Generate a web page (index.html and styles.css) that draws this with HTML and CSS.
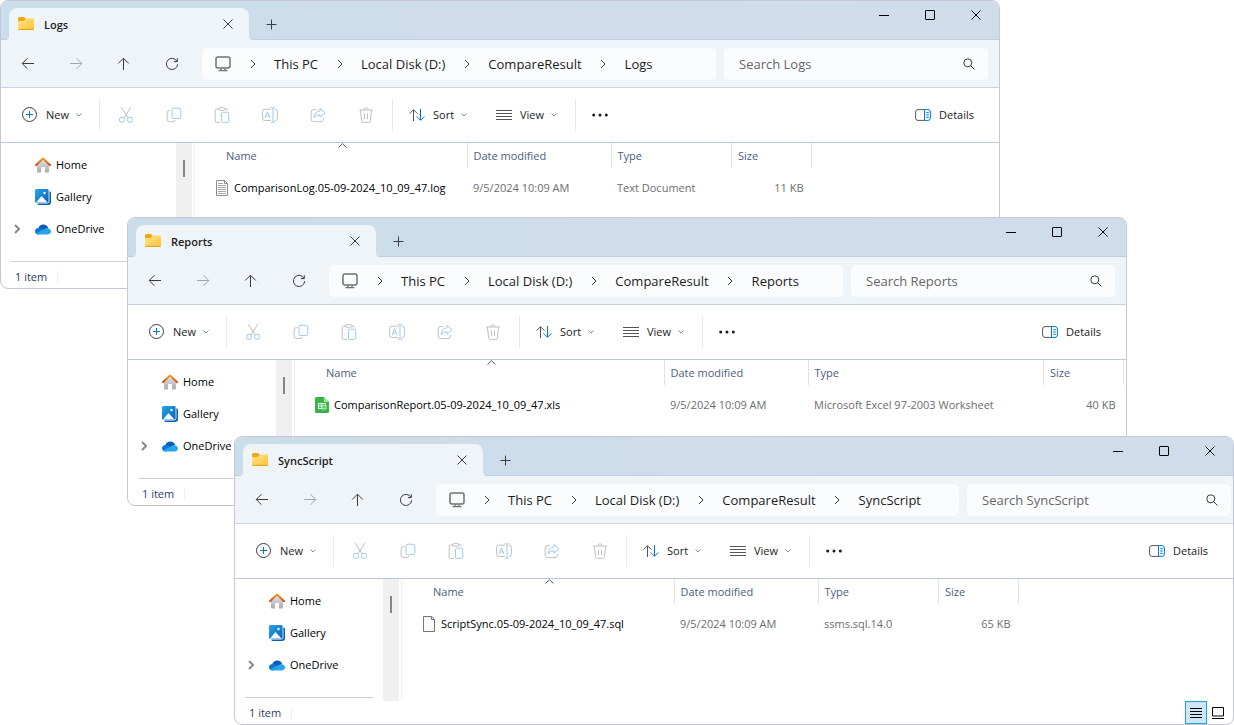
FILE: index.html
```
<!DOCTYPE html>
<html lang="en">
<head>
  <meta charset="UTF-8">
  <meta name="viewport" content="width=device-width, initial-scale=1.0">
  <title>CompareResult</title>
  <link rel="stylesheet" href="styles.css">
</head>
<body>
<svg class="sprite" aria-hidden="true">
  <defs>
    <linearGradient id="g-folder" x1="0" y1="0" x2="1" y2="1">
      <stop offset="0" stop-color="#ffe494"/><stop offset="1" stop-color="#fcc32e"/>
    </linearGradient>
    <linearGradient id="g-roof" x1="0" y1="0" x2="0" y2="1">
      <stop offset="0" stop-color="#f39a1f"/><stop offset="1" stop-color="#d0471a"/>
    </linearGradient>
    <linearGradient id="g-wall" x1="0" y1="0" x2="0" y2="1">
      <stop offset="0" stop-color="#e4e4e4"/><stop offset="1" stop-color="#ababab"/>
    </linearGradient>
    <linearGradient id="g-photo" x1="0" y1="0" x2="1" y2="1">
      <stop offset="0" stop-color="#2aa5ea"/><stop offset="1" stop-color="#0562b8"/>
    </linearGradient>
  </defs>
  <symbol id="folder" viewBox="0 0 16 14">
    <path d="M0 1.5Q0 0 1.5 0H5.3Q6 0 6.6.6L8 2V5H0Z" fill="#f0a80c"/>
    <path d="M0 4H5.6L8 1.6H14.6Q16 1.6 16 3V11.6Q16 13 14.6 13H1.4Q0 13 0 11.6Z" fill="url(#g-folder)"/>
    <path d="M.4 12.4H15.6" stroke="#e2a01c" stroke-width="1"/>
  </symbol>
  <symbol id="x" viewBox="0 0 10 10"><path d="M.5.5 9.5 9.5M9.5.5.5 9.5"/></symbol>
  <symbol id="plus" viewBox="0 0 11 11"><path d="M5.5.5V10.5M.5 5.5H10.5"/></symbol>
  <symbol id="min" viewBox="0 0 10 10"><path d="M0 5.5H10"/></symbol>
  <symbol id="max" viewBox="0 0 10 10"><rect x=".5" y=".5" width="9" height="9" rx=".5"/></symbol>
  <symbol id="back" viewBox="0 0 14 14"><path d="M13 6.5H1.2M6.5 1.2 1.2 6.5 6.5 11.8"/></symbol>
  <symbol id="forward" viewBox="0 0 14 14"><path d="M1 6.5H12.8M7.5 1.2 12.8 6.5 7.5 11.8"/></symbol>
  <symbol id="up" viewBox="0 0 14 14"><path d="M6.5 13V1.2M1.2 6.5 6.5 1.2 11.8 6.5"/></symbol>
  <symbol id="refresh" viewBox="0 0 14 14"><path d="M12 4.4A5.6 5.6 0 1 0 12.6 7.2M12.3 1.2V4.6H8.9"/></symbol>
  <symbol id="pc" viewBox="0 0 16 16">
    <rect x="1" y="1" width="14" height="11" rx="2" stroke-width="1.5"/>
    <path d="M6 12.5V14.5M10 12.5V14.5M3.6 14.7H12.4" stroke-width="1.3"/>
  </symbol>
  <symbol id="chev" viewBox="0 0 6 10"><path d="M1 1 5 5 1 9"/></symbol>
  <symbol id="down" viewBox="0 0 6 4"><path d="M.5.5 3 3 5.5.5"/></symbol>
  <symbol id="caret" viewBox="0 0 9 5"><path d="M.5 4.5 4.5.7 8.5 4.5"/></symbol>
  <symbol id="search" viewBox="0 0 12 12"><circle cx="4.8" cy="4.8" r="4"/><path d="M7.7 7.7 11.4 11.4"/></symbol>
  <symbol id="new" viewBox="0 0 16 16"><circle cx="7.5" cy="7.5" r="7"/><path class="blue" d="M7.5 4V11M4 7.5H11"/></symbol>
  <symbol id="cut" viewBox="0 0 16 16">
    <path d="M3 0 10.2 11M13 0 5.8 11"/>
    <circle class="pale" cx="4" cy="12.8" r="2.6"/><circle class="pale" cx="12" cy="12.8" r="2.6"/>
  </symbol>
  <symbol id="copy" viewBox="0 0 16 16">
    <path d="M4.5 3.7H3.2Q1.2 3.7 1.2 5.7V12.3Q1.2 14.6 3.5 14.6H7Q9 14.6 9 13"/>
    <rect class="pale" x="6" y="1.2" width="8.8" height="10.4" rx="2"/>
  </symbol>
  <symbol id="paste" viewBox="0 0 16 16">
    <path d="M5 2H2.6Q1.2 2 1.2 3.4V14Q1.2 15.4 2.6 15.4H6M11 2H12.2Q13.6 2 13.6 3.4"/>
    <rect x="4.6" y=".6" width="6.4" height="2.6" rx="1.3"/>
    <rect class="pale" x="7.5" y="5.2" width="7.2" height="10.2" rx="1.2"/>
  </symbol>
  <symbol id="rename" viewBox="0 0 16 16">
    <path d="M9 2.2H2.7Q.6 2.2 .6 4.3V11.4Q.6 13.5 2.7 13.5H9M13 2.2Q15.4 2.2 15.4 4.3V11.4Q15.4 13.5 13 13.5"/>
    <path class="pale" d="M11 .7V15.3M8.8.6Q11 .6 11 1.6Q11 .6 13.2.6M8.8 15.4Q11 15.4 11 14.4Q11 15.4 13.2 15.4M3 11 5.5 4.8 8 11M4 9H7.2"/>
  </symbol>
  <symbol id="share" viewBox="0 0 16 16">
    <path d="M6 2.6H3.6Q1.2 2.6 1.2 5V12Q1.2 14.6 3.6 14.6H11Q13.4 14.6 13.4 12V11"/>
    <path class="pale" d="M10 1.4 15 5.8 10 10.2V7.8Q6.2 7.6 4.2 10.6Q4.4 4.6 10 3.9Z"/>
  </symbol>
  <symbol id="trash" viewBox="0 0 16 16"><path d="M1.2 3H14.8M5.8 3Q5.8.8 8 .8T10.2 3M2.4 3 3.6 13.7Q3.8 15.4 5.4 15.4H10.6Q12.2 15.4 12.4 13.7L13.6 3M6.5 6.5V12M9.5 6.5V12"/></symbol>
  <symbol id="sort" viewBox="0 0 16 12"><path d="M4.5 12V.8M.6 4.6 4.5.7 8.4 4.6"/><path class="blue" d="M11.5 0V11.2M7.6 7.4 11.5 11.3 15.4 7.4"/></symbol>
  <symbol id="view" viewBox="0 0 16 10"><path d="M0 .5H16M0 3.5H16M0 6.5H16M0 9.5H16"/></symbol>
  <symbol id="more" viewBox="0 0 16 4"><g class="dots"><circle cx="1.7" cy="2" r="1.5"/><circle cx="8" cy="2" r="1.5"/><circle cx="14.3" cy="2" r="1.5"/></g></symbol>
  <symbol id="details" viewBox="0 0 16 12">
    <path d="M9.5.6H3Q.6.6.6 3V9Q.6 11.4 3 11.4H9.5"/>
    <path class="blue" d="M9.5.6H13Q15.4.6 15.4 3V9Q15.4 11.4 13 11.4H9.5ZM11.2 3.7H13.8M11.2 6H13.8M11.2 8.3H13.8"/>
  </symbol>
  <symbol id="home" viewBox="0 0 16 16">
    <path d="M2 7.5 8 2 14 7.5V14.6Q14 15.6 13 15.6H10V10H6V15.6H3Q2 15.6 2 14.6Z" fill="url(#g-wall)"/>
    <path d="M.9 8.2 8 1.4 15.1 8.2" fill="none" stroke="url(#g-roof)" stroke-width="1.9" stroke-linecap="round" stroke-linejoin="round"/>
  </symbol>
  <symbol id="gallery" viewBox="0 0 16 16">
    <path d="M14.4 2.2Q16 2.4 16 4V13.6Q16 16 13.6 16H4Q2.4 16 2.2 14.4H12.6Q14.4 14.4 14.4 12.6Z" fill="#0b5fae"/>
    <rect width="13.6" height="13.8" rx="1.4" fill="url(#g-photo)"/>
    <path d="M1 13.4 6.5 7 12.6 13.4Z" fill="#f2f9ff"/><circle cx="9.5" cy="4" r="1.2" fill="#fff"/>
  </symbol>
  <symbol id="onedrive" viewBox="0 0 16 11">
    <path d="M3 5Q4.2.4 8.4.4Q12 .4 13.2 4L8 7Z" fill="#0a5cb5"/>
    <path d="M3.5 10.4Q0 10.2 0 7.2Q.2 4.2 3.6 4Q6 3.6 8.5 6L12 8Z" fill="#0b78d4"/>
    <path d="M3.5 10.4Q1.8 10.4 1 9.4L9.5 5Q11 3.9 12.8 4.2Q16 4.8 16 7.6Q15.8 10.3 12.8 10.4Z" fill="#27a5ec"/>
  </symbol>
  <symbol id="file-log" viewBox="0 0 12 16">
    <path d="M.5.5H8.5L11.5 3.5V15.5H.5Z" fill="#fff" stroke="#8c8c8c"/><path d="M8.5.5V3.5H11.5" fill="none" stroke="#8c8c8c"/>
    <path d="M2 3.5H7M2 5.5H10M2 7.5H10M2 9.5H10M2 11.5H10M2 13.5H10" stroke="#a5a5a5"/>
  </symbol>
  <symbol id="file-xls" viewBox="0 0 14 16">
    <path d="M1.5 0H9L14 5V14.5Q14 16 12.5 16H1.5Q0 16 0 14.5V1.5Q0 0 1.5 0Z" fill="#3bb54a"/><path d="M9 0 14 5H9Z" fill="#a9e79c"/>
    <path d="M3.5 6.5H10.5V11.5H3.5ZM3.5 9H7M7 6.5V11.5" fill="none" stroke="#fff"/><path d="M7 8.5H11V12H7Z" fill="#58c95b" stroke="#d9f7d2" stroke-width=".8"/>
  </symbol>
  <symbol id="file-sql" viewBox="0 0 12 16">
    <path d="M.5.5H8.5L11.5 3.5V15.5H.5Z" fill="#fafafa" stroke="#777"/><path d="M8.5.5V3.5H11.5" fill="none" stroke="#777"/>
  </symbol>
  <symbol id="list-view" viewBox="0 0 12 10"><path d="M0 .5H12M0 3.5H12M0 6.5H12M0 9.5H12"/></symbol>
  <symbol id="tile-view" viewBox="0 0 12 12"><path d="M.5.5H11.5V9H.5ZM0 11.5H12"/></symbol>
</svg>

<main class="desktop" id="desktop">
  <!-- explorer windows are rendered here -->
</main>

<script>
    const windows = [
        { id: "logs", folder: "Logs", icon: "file-log", file: "ComparisonLog.05-09-2024_10_09_47.log", type: "Text Document", size: "11 KB" },
        { id: "reports", folder: "Reports", icon: "file-xls", file: "ComparisonReport.05-09-2024_10_09_47.xls", type: "Microsoft Excel 97-2003 Worksheet", size: "40 KB" },
        { id: "sync", folder: "SyncScript", icon: "file-sql", file: "ScriptSync.05-09-2024_10_09_47.sql", type: "ssms.sql.14.0", size: "65 KB" }
    ];

    function icon(name) {
        return `<svg class="icon i-${name}" aria-hidden="true"><use href="#${name}"/></svg>`;
    }

    function iconButton(name, label, cls) {
        return `<button type="button" class="${cls}" aria-label="${label}">${icon(name)}</button>`;
    }

    function menuButton(name, label) {
        return `<button type="button" class="menu-btn">${icon(name)}<span>${label}</span>${icon("down")}</button>`;
    }

    function crumbs(folder) {
        return ["This PC", "Local Disk (D:)", "CompareResult", folder]
            .map(c => `<span class="crumb-sep">${icon("chev")}</span><a href="#">${c}</a>`).join("");
    }

    function renderWindow(w) {
        return `
        <section class="window ${w.id}">
          <header class="titlebar">
            <div class="tab">${icon("folder")}<span class="tab-title">${w.folder}</span>${iconButton("x", "Close tab", "tab-close")}</div>
            ${iconButton("plus", "New tab", "tab-new")}
            <div class="controls">
              ${iconButton("min", "Minimize", "control")}${iconButton("max", "Maximize", "control")}${iconButton("x", "Close", "control")}
            </div>
          </header>
          <div class="navbar">
            <div class="nav-buttons">
              ${iconButton("back", "Back", "icon-btn")}${iconButton("forward", "Forward", "icon-btn")}${iconButton("up", "Up", "icon-btn")}${iconButton("refresh", "Refresh", "icon-btn")}
            </div>
            <nav class="address">${icon("pc")}${crumbs(w.folder)}</nav>
            <label class="search"><input type="text" aria-label="Search" placeholder="Search ${w.folder}">${icon("search")}</label>
          </div>
          <div class="toolbar">
            ${menuButton("new", "New")}
            <div class="tool-group edit">
              ${iconButton("cut", "Cut", "icon-btn")}${iconButton("copy", "Copy", "icon-btn")}${iconButton("paste", "Paste", "icon-btn")}${iconButton("rename", "Rename", "icon-btn")}${iconButton("share", "Share", "icon-btn")}${iconButton("trash", "Delete", "icon-btn")}
            </div>
            <div class="tool-group arrange">${menuButton("sort", "Sort")}${menuButton("view", "View")}</div>
            ${iconButton("more", "More", "icon-btn")}
            <button type="button" class="menu-btn details-btn">${icon("details")}<span>Details</span></button>
          </div>
          <div class="content">
            <aside class="sidebar">
              <ul class="places">
                <li><a href="#">${icon("home")}Home</a></li>
                <li><a href="#">${icon("gallery")}Gallery</a></li>
                <li>${icon("chev")}<a href="#">${icon("onedrive")}OneDrive</a></li>
              </ul>
              <div class="scrollbar"><div class="thumb"></div></div>
            </aside>
            <table class="files">
              <colgroup><col class="c-name"><col class="c-date"><col class="c-type"><col class="c-size"></colgroup>
              <thead><tr><th>Name${icon("caret")}</th><th>Date modified</th><th>Type</th><th>Size</th></tr></thead>
              <tbody><tr>
                <td><div class="file">${icon(w.icon)}<span>${w.file}</span></div></td>
                <td>9/5/2024 10:09 AM</td><td>${w.type}</td><td>${w.size}</td>
              </tr></tbody>
            </table>
          </div>
          <footer class="status">
            <span class="count">1 item</span>
            ${iconButton("list-view", "Details view", "view-btn active")}${iconButton("tile-view", "Large icons view", "view-btn")}
          </footer>
        </section>`;
    }

    document.getElementById("desktop").innerHTML = windows.map(renderWindow).join("");
</script>
</body>
</html>
```
FILE: styles.css
```
* {
  margin: 0;
  padding: 0;
  box-sizing: border-box;
}

body {
  font-family: "Open Sans", "Noto Sans", sans-serif;
  font-size: 11px;
  line-height: 16px;
  color: #1b1b1b;
  background: #fff;
}

a {
  color: inherit;
  text-decoration: none;
}

button {
  border: none;
  background: none;
  font: inherit;
  color: inherit;
  cursor: pointer;
  display: flex;
  align-items: center;
  justify-content: center;
}

.sprite {
  position: absolute;
  width: 0;
  height: 0;
}

/* icons */
.icon {
  width: 16px;
  height: 16px;
  flex: none;
  fill: none;
  stroke: #3c3c3c;
}
.blue { stroke: #0078d4; }
.pale { stroke: #9bcbee; }
.dots { fill: #1b1b1b; stroke: none; }

.i-folder { height: 14px; stroke: none; }
.i-x { width: 10px; height: 10px; }
.i-plus { width: 11px; height: 11px; }
.i-min, .i-max { width: 10px; height: 10px; }
.i-back, .i-forward, .i-up, .i-refresh { width: 14px; height: 14px; }
.i-forward { stroke: #a3a7ab; }
.i-pc { stroke: #707070; }
.i-chev { width: 6px; height: 10px; }
.i-down { width: 6px; height: 4px; stroke: #8a8a8a; }
.i-caret { width: 9px; height: 5px; stroke: #555; }
.i-search { width: 12px; height: 12px; }
.i-sort, .i-details { height: 12px; stroke: #555; }
.i-view { height: 10px; stroke: #555; }
.i-more { height: 4px; }
.i-home, .i-gallery, .i-onedrive { stroke: none; }
.i-onedrive { height: 11px; }
.i-file-log, .i-file-sql { width: 12px; stroke: none; }
.i-file-xls { width: 14px; margin: 0 -1px; stroke: none; }
.i-list-view { width: 12px; height: 10px; stroke: #000; }
.i-tile-view { width: 12px; height: 12px; stroke: #000; }

/* windows */
.desktop {
  position: relative;
  min-height: 100vh;
  overflow: hidden;
}

.window {
  position: absolute;
  width: calc(100% - 234px);
  min-width: 860px;
  border: 1px solid #c5c7d6;
  border-radius: 8px;
  background: #fff;
  overflow: hidden;
}
.logs { left: 0; top: 0; }
.reports { left: 127px; top: 217px; }
.sync { left: 234px; top: 436px; }

.titlebar {
  display: flex;
  height: 39px;
  padding-left: 8px;
  border-bottom: 1px solid #bfcfe1;
  background: linear-gradient(90deg, #c9ddea, #d0dcec 60%, #cfddeb);
}

.tab {
  position: relative;
  display: flex;
  align-items: center;
  width: 240px;
  height: 32px;
  margin-top: 7px;
  padding: 0 7px 0 9px;
  border-radius: 8px 8px 0 0;
  background: #eff4f9;
}
.tab::before, .tab::after {
  content: "";
  position: absolute;
  bottom: 0;
  width: 4px;
  height: 4px;
}
.tab::before {
  right: 100%;
  background: radial-gradient(circle at 0 0, transparent 4px, #eff4f9 4px);
}
.tab::after {
  left: 100%;
  background: radial-gradient(circle at 100% 0, transparent 4px, #eff4f9 4px);
}
.tab-title {
  flex: 1;
  margin-left: 10px;
  padding-top: 2px;
  font-weight: 600;
}
.tab-close {
  width: 28px;
  height: 28px;
}
.tab-new {
  width: 44px;
  height: 32px;
  margin-top: 7px;
}
.controls {
  display: flex;
  margin-left: auto;
}
.control {
  width: 46px;
  height: 28px;
}
.control .icon { stroke: #000; }

.navbar {
  display: flex;
  align-items: center;
  height: 48px;
  padding: 0 11px 0 3px;
  border-bottom: 1px solid #c8d2e0;
  background: #eff4f9;
}
.sync .navbar { padding-right: 2px; }

.nav-buttons {
  display: flex;
  margin-right: 6px;
}
.icon-btn {
  width: 48px;
  height: 32px;
}

.address {
  flex: 1;
  display: flex;
  align-items: center;
  height: 32px;
  padding-left: 13px;
  border-radius: 5px;
  background: #fbfcfe;
  font-size: 13px;
  white-space: nowrap;
}
.crumb-sep {
  display: flex;
  justify-content: center;
  width: 43px;
}

.search {
  display: flex;
  align-items: center;
  width: 264px;
  height: 32px;
  margin-left: 8px;
  padding: 0 13px 0 15px;
  border-radius: 5px;
  background: #fbfcfe;
}
.search input {
  flex: 1;
  min-width: 0;
  border: none;
  outline: none;
  background: none;
  font: inherit;
  font-size: 13px;
}
.search input::placeholder { color: #666; }

.toolbar {
  display: flex;
  align-items: center;
  height: 55px;
  padding: 0 20px 0 12px;
  border-bottom: 1px solid #bac8dc;
}
.menu-btn {
  justify-content: flex-start;
  width: 87px;
  height: 32px;
  padding-left: 8px;
}
.menu-btn span { margin: 0 7px 0 8px; }
.toolbar > .menu-btn:first-child {
  width: 86px;
  padding-left: 9px;
}
.tool-group {
  display: flex;
  border: solid #e9e9ec;
  border-width: 0 1px;
}
.tool-group.edit { padding: 0 2px; }
.tool-group.arrange {
  border-left: none;
  padding-left: 8px;
}
.edit .icon { stroke: #bfbfbf; }
.toolbar > .details-btn {
  width: auto;
  margin-left: auto;
}
.details-btn span { margin-right: 5px; }

.content {
  display: flex;
  min-height: 122px;
}
.sidebar {
  display: flex;
  flex: none;
  width: 167px;
  padding: 0 2px 0 10px;
  border-right: 1px solid #f0f0f2;
}
.logs .sidebar { width: 194px; }
.places {
  flex: 1;
  margin: 0 9px 3px 0;
  padding-top: 6px;
  border-bottom: 1px solid #cfcfcf;
  list-style: none;
  color: #000;
}
.places li {
  display: flex;
  align-items: center;
  justify-content: flex-end;
  height: 32px;
}
.places a {
  display: flex;
  align-items: center;
  gap: 5px;
  width: calc(100% - 24px);
}
.places .i-chev {
  margin: 0 auto 0 3px;
  stroke: #8a8a8a;
  stroke-width: 2;
}
.scrollbar {
  width: 16px;
  padding: 17px 7px;
  background: #f0f0f0;
}
.thumb {
  width: 2px;
  height: 17px;
  background: #858585;
}

.files {
  align-self: flex-start;
  margin-left: 21px;
  table-layout: fixed;
  width: 596px;
  border-collapse: collapse;
  color: #6d6d6d;
}
.reports .files { width: 808px; }
.c-name { width: 251px; }
.c-date { width: 144px; }
.c-size { width: 80px; }
.reports .c-name { width: 348px; }

.files th {
  position: relative;
  height: 25px;
  padding: 1px 0 0 6px;
  border-right: 1px solid #e2e2e6;
  text-align: left;
  font-weight: 400;
  color: #4c607a;
}
.files th:first-child { padding-left: 10px; }
.i-caret {
  position: absolute;
  top: 0;
  left: 50%;
  margin-left: -3px;
}
.files td {
  height: 39px;
  padding-left: 6px;
  white-space: nowrap;
}
.files td:first-child {
  padding-left: 0;
  color: #000;
}
.files td:last-child {
  padding-right: 8px;
  text-align: right;
}
.file {
  display: flex;
  align-items: center;
  gap: 6px;
}

.status {
  display: flex;
  align-items: center;
  height: 23px;
  padding: 0 4px 0 14px;
  color: #2c3d63;
}
.count {
  margin-right: auto;
  padding-right: 10px;
  border-right: 1px solid #efeff3;
  line-height: 12px;
}
.view-btn {
  width: 22px;
  height: 23px;
}
.view-btn.active {
  border: 1px solid #26a0da;
  background: #cce8f6;
}
```
